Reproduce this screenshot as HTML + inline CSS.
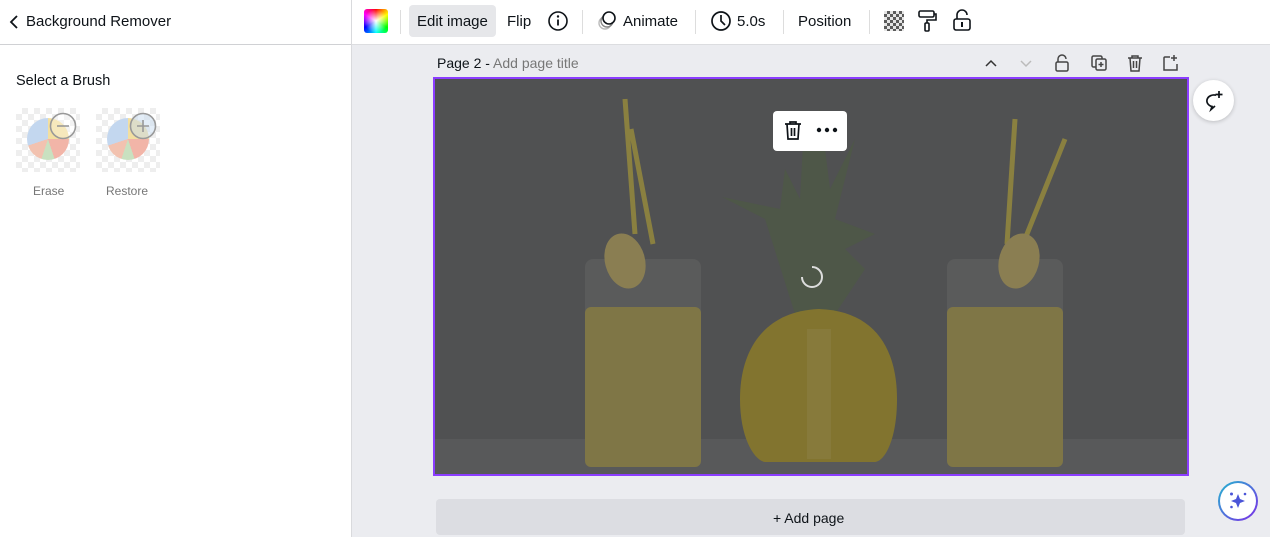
<!DOCTYPE html><html><head><style>
body{margin:0;width:1270px;height:537px;overflow:hidden;font-family:"Liberation Sans",sans-serif;background:#ebecf0;position:relative}
.a{position:absolute}
.t{font-size:15px;color:#0e1318}
</style></head><body>
<div class="a" style="left:0;top:0;width:351px;height:537px;background:#fff;border-right:1px solid #d9dadd"></div>
<div class="a" style="left:0;top:44px;width:351px;height:1px;background:#d0d1d4"></div>
<svg class="a" style="left:8px;top:14px" width="12" height="16"><path d="M9 2L3 8l6 6" stroke="#0e1318" stroke-width="1.8" fill="none"/></svg>
<div class="a t" style="left:26px;top:13px">Background Remover</div>
<div class="a t" style="left:16px;top:73px;font-size:14.5px">Select a Brush</div>
<div class="a" style="left:16px;top:108px;width:64px;height:64px;background:repeating-conic-gradient(#eee 0 25%,#fff 0 50%) 0 0/12px 12px"></div>
<div class="a" style="left:96px;top:108px;width:64px;height:64px;background:repeating-conic-gradient(#eee 0 25%,#fff 0 50%) 0 0/12px 12px"></div>
<div class="a" style="left:27px;top:118px;width:42px;height:42px;border-radius:50%;background:conic-gradient(#f3dfa0 0 25%,#f2b5a8 0 45%,#c9e1c0 0 55%,#f2c2b0 0 70%,#c3d7ef 0)"></div>
<div class="a" style="left:107px;top:118px;width:42px;height:42px;border-radius:50%;background:conic-gradient(#f3dfa0 0 25%,#f2b5a8 0 45%,#c9e1c0 0 55%,#f2c2b0 0 70%,#c3d7ef 0)"></div>
<svg class="a" style="left:48px;top:111px" width="30" height="30"><circle cx="15" cy="15" r="12.5" fill="rgba(255,255,255,.3)" stroke="#999" stroke-width="1.6"/><path d="M9 15h12" stroke="#999" stroke-width="1.6"/></svg>
<svg class="a" style="left:128px;top:111px" width="30" height="30"><circle cx="15" cy="15" r="12.5" fill="rgba(200,220,240,.5)" stroke="#999" stroke-width="1.6"/><path d="M9 15h12M15 9v12" stroke="#999" stroke-width="1.6"/></svg>
<div class="a" style="left:33px;top:184px;font-size:12px;color:#777">Erase</div>
<div class="a" style="left:106px;top:184px;font-size:12px;color:#777">Restore</div>

<div class="a" style="left:352px;top:0;width:918px;height:44px;background:#fff;border-bottom:1px solid #dcdde0"></div>
<div class="a" style="left:364px;top:9px;width:24px;height:24px;border-radius:3px;background:radial-gradient(circle,#fff 0,rgba(255,255,255,0) 70%),conic-gradient(red,#ff0,#0f0,#0ff,#00f,#f0f,red)"></div>
<div class="a" style="left:400px;top:10px;width:1px;height:24px;background:#ddd"></div>
<div class="a" style="left:409px;top:5px;width:87px;height:32px;background:#e6e7ea;border-radius:4px"></div>
<div class="a t" style="left:417px;top:13px">Edit image</div>
<div class="a t" style="left:507px;top:13px">Flip</div>
<svg class="a" style="left:547px;top:10px" width="22" height="22"><circle cx="11" cy="11" r="9" stroke="#0e1318" stroke-width="1.6" fill="none"/><path d="M11 9.5v6" stroke="#0e1318" stroke-width="1.8"/><circle cx="11" cy="6.5" r="1.2" fill="#0e1318"/></svg>
<div class="a" style="left:582px;top:10px;width:1px;height:24px;background:#ddd"></div>
<svg class="a" style="left:596px;top:9px" width="24" height="24"><circle cx="9" cy="14" r="6" stroke="#bbb" fill="none" stroke-width="1.4"/><circle cx="11" cy="12" r="6" stroke="#888" fill="none" stroke-width="1.4"/><circle cx="13" cy="9" r="6" stroke="#0e1318" fill="#fff" stroke-width="1.6"/></svg>
<div class="a t" style="left:623px;top:13px">Animate</div>
<div class="a" style="left:695px;top:10px;width:1px;height:24px;background:#ddd"></div>
<svg class="a" style="left:710px;top:10px" width="22" height="22"><circle cx="11" cy="11" r="9" stroke="#0e1318" stroke-width="1.7" fill="none"/><path d="M11 5v6l4 4" stroke="#0e1318" stroke-width="1.7" fill="none"/></svg>
<div class="a t" style="left:737px;top:13px">5.0s</div>
<div class="a" style="left:783px;top:10px;width:1px;height:24px;background:#ddd"></div>
<div class="a t" style="left:798px;top:13px">Position</div>
<div class="a" style="left:869px;top:10px;width:1px;height:24px;background:#ddd"></div>
<div class="a" style="left:884px;top:11px;width:20px;height:20px;background:repeating-conic-gradient(#333 0 25%,#e0e0e0 0 50%) 0 0/6px 6px;opacity:.8"></div>
<svg class="a" style="left:916px;top:9px" width="22" height="24"><rect x="3" y="2" width="15" height="6" rx="1.5" stroke="#0e1318" stroke-width="1.6" fill="none"/><path d="M18 5h2v6h-9v3" stroke="#0e1318" stroke-width="1.6" fill="none"/><rect x="9" y="14" width="4" height="8" rx="1" stroke="#0e1318" stroke-width="1.6" fill="none"/></svg>
<svg class="a" style="left:951px;top:8px" width="22" height="24"><path d="M6 11V7a5 5 0 0 1 10 0" stroke="#0e1318" stroke-width="1.6" fill="none"/><rect x="3" y="11" width="16" height="11" rx="2" stroke="#0e1318" stroke-width="1.6" fill="none"/><path d="M11 14v5" stroke="#0e1318" stroke-width="2"/></svg>

<div class="a" style="left:437px;top:55px;font-size:14px;color:#0e1318">Page 2 - <span style="color:#777">Add page title</span></div>
<svg class="a" style="left:980px;top:52px" width="200" height="22" fill="none" stroke-width="1.5">
<path d="M6 14l5-5 5 5" stroke="#333"/><path d="M41 9l5 5 5-5" stroke="#bbb"/>
<path d="M78 10V7a4 4 0 0 1 8 0" stroke="#444"/><rect x="76" y="10" width="12" height="9" rx="1.5" stroke="#444"/>
<rect x="112" y="4" width="10" height="11" rx="1.5" stroke="#444"/><rect x="116" y="7" width="10" height="11" rx="1.5" stroke="#444" fill="#ebecf0"/><path d="M121 10v5M118.5 12.5h5" stroke="#444"/>
<path d="M148 6h14M152 6V4h6v2M150 6l1 13h8l1-13M153.5 9v7M156.5 9v7" stroke="#444"/>
<path d="M190 5h-5a1 1 0 0 0-1 1v12h13v-6M194 3v6M191 6h6" stroke="#444"/></svg>

<div class="a" style="left:433px;top:77px;width:752px;height:395px;border:2px solid #8b3dff;background:#505152;overflow:hidden">
 <svg class="a" style="left:0;top:0" width="752" height="395">
  <rect x="0" y="360" width="752" height="35" fill="#58595a"/>
  <path d="M190 20l10 135M196 50l22 115M580 40l-8 125M630 60l-40 100" stroke="#8a8040" stroke-width="5"/>
  <rect x="150" y="180" width="116" height="208" rx="8" fill="#5a5b5b"/>
  <rect x="150" y="228" width="116" height="160" rx="6" fill="#7f7646"/>
  <rect x="512" y="180" width="116" height="208" rx="8" fill="#5a5b5b"/>
  <rect x="512" y="228" width="116" height="160" rx="6" fill="#7f7646"/>
  <ellipse cx="190" cy="182" rx="20" ry="28" transform="rotate(-15 190 182)" fill="#8a7e52"/>
  <ellipse cx="584" cy="182" rx="20" ry="28" transform="rotate(15 584 182)" fill="#8a7e52"/>
  <path d="M360 235L330 140 287 118 345 130 350 90 365 120 368 65 385 30 395 110 420 60 400 140 440 155 410 170 430 190 400 235z" fill="#4e5748"/>
  <path d="M384 230C330 232 305 270 305 320 305 360 320 382 330 383H440C450 382 462 360 462 320 462 270 440 232 384 230z" fill="#82742f"/>
  <path d="M372 250h24v130h-24z" fill="#8a7e44" opacity=".6"/>
 </svg>
</div>
<svg class="a" style="left:799px;top:264px" width="26" height="26"><path d="M13 3a10 10 0 1 1-10 10" stroke="#ddd" stroke-width="2" fill="none"/></svg>
<div class="a" style="left:773px;top:111px;width:74px;height:40px;background:#fff;border-radius:4px"></div>
<svg class="a" style="left:782px;top:119px" width="22" height="24" fill="none" stroke="#0e1318" stroke-width="1.7"><path d="M3 5h16M8 5V3h6v2M5 5l1 15h10l1-15M9.5 9v8M12.5 9v8"/></svg>
<svg class="a" style="left:815px;top:126px" width="24" height="8"><circle cx="4" cy="4" r="2.2" fill="#0e1318"/><circle cx="12" cy="4" r="2.2" fill="#0e1318"/><circle cx="20" cy="4" r="2.2" fill="#0e1318"/></svg>

<div class="a" style="left:1193px;top:80px;width:41px;height:41px;border-radius:50%;background:#fff;box-shadow:0 1px 4px rgba(0,0,0,.2)"></div>
<svg class="a" style="left:1200px;top:87px" width="28" height="28" fill="none" stroke="#0e1318" stroke-width="1.7"><path d="M16 8.2A7 5.8 0 1 0 12 19.5L11 22.5 15 19"/><path d="M19 4v7M15.5 7.5h7"/></svg>

<div class="a" style="left:436px;top:499px;width:749px;height:36px;background:#dcdde2;border-radius:4px"></div>
<div class="a" style="left:773px;top:510px;font-size:14px;color:#0e1318">+ Add page</div>
<div class="a" style="left:1218px;top:481px;width:40px;height:40px;border-radius:50%;background:#fff;border:2px solid transparent;background-image:linear-gradient(#fff,#fff),linear-gradient(135deg,#22b8cf,#7d2ae8);background-origin:border-box;background-clip:padding-box,border-box;box-sizing:border-box"></div>
<svg class="a" style="left:1226px;top:489px" width="24" height="24" fill="#4b55d8"><path d="M12 5l2 5 5 2-5 2-2 5-2-5-5-2 5-2z"/><circle cx="5.5" cy="5" r="1.5"/><circle cx="19" cy="5" r="1.3"/><circle cx="5.5" cy="18" r="1.3"/></svg>
</body></html>
